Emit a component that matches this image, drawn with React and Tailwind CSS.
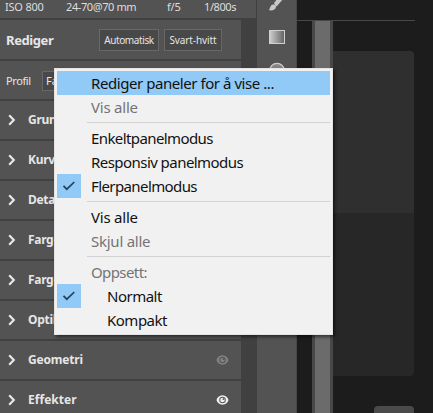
const sections = [
  { label: 'Grunnleggende', covered: true },
  { label: 'Kurve', covered: true },
  { label: 'Detaljer', covered: true },
  { label: 'Fargemikser', covered: true },
  { label: 'Fargegradering', covered: true },
  { label: 'Optikk', covered: true },
  { label: 'Geometri', eye: 'text-[#828282]', spacing: 'tracking-[-0.2px]' },
  { label: 'Effekter', eye: 'text-[#f0f0f0]', spacing: 'tracking-[0.050px]' },
];

const groups = [
  [
    { label: 'Rediger paneler for å vise ...', active: true, spacing: 'tracking-[-0.44px]' },
    { label: 'Vis alle', muted: true, spacing: 'tracking-[-0.22px]' },
  ],
  [
    { label: 'Enkeltpanelmodus', spacing: 'tracking-[-0.6px]' },
    { label: 'Responsiv panelmodus', spacing: 'tracking-[-0.55px]' },
    { label: 'Flerpanelmodus', checked: true, spacing: 'tracking-[-0.6px]' },
  ],
  [
    { label: 'Vis alle', spacing: 'tracking-[-0.22px]' },
    { label: 'Skjul alle', muted: true, spacing: 'tracking-[-0.25px]' },
  ],
  [
    { label: 'Oppsett:', muted: true, spacing: 'tracking-[-0.6px]' },
    { label: 'Normalt', checked: true, indent: true, spacing: 'tracking-[-0.5px]' },
    { label: 'Kompakt', indent: true, spacing: 'tracking-[-0.5px]' },
  ],
];

function Chevron() {
  return (
    <svg width="8" height="12" viewBox="0 0 8 12" fill="none" stroke="#e6e6e6" strokeWidth="2.2">
      <path d="M1.2 1.2 5.8 6 1.2 10.8" />
    </svg>
  );
}

function Eye({ className }) {
  return (
    <svg width="13" height="10" viewBox="0 0 14 10" className={className}>
      <path fill="currentColor" fillRule="evenodd" d="M7 0C3.5 0 1.2 2.4.5 5 1.2 7.6 3.5 10 7 10s5.8-2.4 6.5-5C12.8 2.4 10.5 0 7 0Zm0 1.5a3.5 3.5 0 1 1 0 7 3.5 3.5 0 0 1 0-7Z" />
      <circle cx="7" cy="5" r="2.5" fill="currentColor" />
      <circle cx="8" cy="4" r="1" fill="#535353" />
    </svg>
  );
}

function Menu() {
  return (
    <div className="absolute left-[54px] top-[68px] h-[267px] w-[279px] border border-[#e4e4e4] bg-[#f1f1f1] p-[2px] shadow-[2px_2px_3px_rgba(0,0,0,0.5)]">
      {groups.map((items, g) => (
        <div key={g}>
          {g > 0 && (
            <div className="flex h-[7px] items-center pl-[30px]">
              <div className="h-px w-full bg-[#d2d2d2]" />
            </div>
          )}
          {items.map((item) => (
            <div key={item.label} className={`flex h-6 items-center ${item.active ? 'bg-[#91c9f7]' : ''}`}>
              <div className={`flex h-6 w-6 shrink-0 items-center justify-center ${item.checked ? 'bg-[#91c9f7]' : ''}`}>
                {item.checked && (
                  <svg width="14" height="10" viewBox="0 0 14 10" fill="none" stroke="#24445e" strokeWidth="1.7">
                    <path d="m1.5 4.8 3.3 3.4L12.3 1" />
                  </svg>
                )}
              </div>
              <span className={`whitespace-pre leading-6 ${item.indent ? 'pl-[26px]' : 'pl-[10px]'} ${item.muted ? 'text-[#747474]' : 'text-[#111]'} ${item.spacing}`}>
                {item.label}
              </span>
            </div>
          ))}
        </div>
      ))}
    </div>
  );
}

export default function App() {
  return (
    <div className="relative flex h-[413px] w-[433px] overflow-hidden bg-[#1c1c1c] font-['Noto_Sans',sans-serif] text-[15px]">
      <div className="flex w-[257px] shrink-0 flex-col bg-[#404040]">
        <div className="flex h-[18px] shrink-0 border-r border-[#404040] bg-[#535353] pl-[5px] text-[11px] leading-[13px] tracking-[-0.2px] text-[#dedede]">
          <span className="w-[61px]">ISO 800</span>
          <span className="w-[101px] tracking-[-0.4px]">24-70@70 mm</span>
          <span className="w-[37px]">f/5</span>
          <span className="tracking-[-0.4px]">1/800s</span>
        </div>
        <div className="mt-[2px] flex w-[241px] flex-col gap-[2px] text-[11px] text-[#e6e6e6]">
          <div className="flex h-[39px] items-center bg-[#535353] pl-[6px] pt-px">
            <span className="w-[93px] pt-px text-[13px] font-bold tracking-[-0.4px]">Rediger</span>
            <div className="flex h-[22px] w-[60px] items-center justify-center whitespace-nowrap border border-[#686868] bg-[#484848] text-[10px] tracking-[-0.4px]">Automatisk</div>
            <div className="ml-[5px] flex h-[22px] w-[58px] items-center justify-center whitespace-nowrap border border-[#686868] bg-[#484848] text-[10px] tracking-[-0.1px]">Svart-hvitt</div>
          </div>
          <div className="flex h-[38px] items-center bg-[#535353] pl-[6px] pt-px">
            <span className="w-9 pt-px tracking-[-0.4px]">Profil</span>
            <div className="flex h-5 w-[80px] items-center border border-[#686868] bg-[#484848] pl-[3px] pt-px">
              Farge
            </div>
          </div>
          {sections.map((s, i) => (
            <div key={i} className="flex h-[38px] shrink-0 items-center bg-[#535353] pl-[8px] pr-3">
              <Chevron />
              <span className={`ml-3 flex-1 text-[12px] font-bold ${s.covered ? 'tracking-[-0.3px]' : s.spacing}`}>{s.label}</span>
              {s.eye && <Eye className={s.eye} />}
            </div>
          ))}
        </div>
      </div>
      <div className="flex w-10 shrink-0 flex-col items-center border-r border-[#484848] bg-[#535353]">
        <svg width="39" height="84" viewBox="0 0 39 84">
          <defs>
            <linearGradient id="fade">
              <stop stopColor="#d0d0d0" />
              <stop offset="1" stopColor="#626262" />
            </linearGradient>
          </defs>
          <path d="m17 3 4-5h6l-7 8c-.8.8-2.2-.6-3-3Z" fill="#c8c8c8" />
          <path d="M11.5 10c2-.5 1.2-5 4.500-5.500 2-.2 3.200 1 3 2.500-.5 3-4 4.200-7.500 3Z" fill="#c8c8c8" />
          <rect x="12.5" y="30.5" width="15" height="13" fill="url(#fade)" stroke="#d0d0d0" />
          <circle cx="20" cy="70.5" r="7.2" fill="#858585" stroke="#d0d0d0" strokeWidth="1.3" />
        </svg>
      </div>
      <div className="flex w-[118px] flex-col pt-5">
        <div className="h-px shrink-0 bg-[#484848]" />
        <div className="flex flex-1">
          <div className="ml-[15px] w-[21px] shrink-0 border-l-[3px] border-r-[3px] border-[#484848] bg-[#6b6b6b]" />
          <div className="flex w-[81px] flex-col pt-[30px]">
            <div className="h-[162px] shrink-0 rounded-tr bg-[#2f2f2f]" />
            <div className="h-[163px] shrink-0 rounded-br bg-[#272727]" />
            <div className="mt-[30px] h-[7px] w-10 self-end rounded-t bg-[#4a4a4a]" />
          </div>
        </div>
      </div>
      <Menu />
    </div>
  );
}
